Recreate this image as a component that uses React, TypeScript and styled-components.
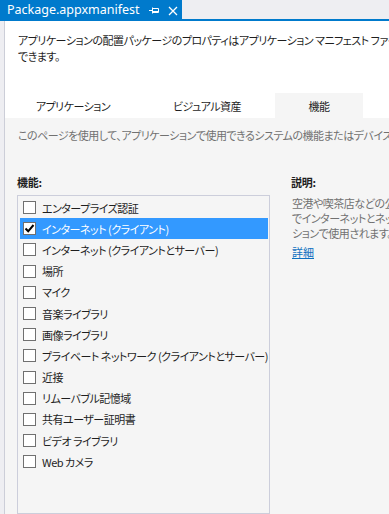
import React from "react";
import styled, { createGlobalStyle } from "styled-components";

const GlobalStyle = createGlobalStyle`
  html, body { margin: 0; padding: 0; overflow: hidden; background: #f5f5f5; }
  body { font-family: "Noto Sans CJK JP", "Noto Sans", sans-serif; }
`;

const JP = `"Noto Sans CJK JP", "Noto Sans", sans-serif`;

const Window = styled.div`
  width: 389px;
  height: 514px;
  overflow: hidden;
  display: flex;
  flex-direction: column;
  background: #f5f5f5;
`;

const TabStrip = styled.div`
  height: 19px;
  flex: none;
  background: #eeeef2;
  border-bottom: 2px solid #007acc;
  display: flex;
`;

const DocTab = styled.div`
  width: 182px;
  background: #007acc;
  color: #ffffff;
  display: flex;
  align-items: center;
  padding-left: 7px;
  box-sizing: border-box;
  font-family: "Noto Sans", sans-serif;
  font-size: 12.5px;
  height: 21px;
  margin-bottom: -2px;
`;

const DocTitle = styled.span`
  flex: 1;
  white-space: nowrap;
  line-height: 19px;
  padding-bottom: 2px;
`;

const IconBtn = styled.span`
  width: 17px;
  height: 19px;
  display: flex;
  align-items: center;
  justify-content: center;
  margin-right: 1px;
`;

const Body = styled.div`
  flex: 1;
  display: flex;
  min-height: 0;
`;

const LeftEdge = styled.div`
  width: 4px;
  flex: none;
  background: #eeeef2;
  border-right: 1px solid #ccced8;
`;

const Content = styled.div`
  flex: none;
  width: 600px;
  display: flex;
  flex-direction: column;
`;

const Header = styled.div`
  background: #ffffff;
  padding: 11px 0 0 13px;
`;

const Line = styled.div`
  font-family: ${JP};
  font-size: 11px;
  letter-spacing: -0.5px;
  line-height: 16px;
  color: #1e1e1e;
  white-space: nowrap;
  font-feature-settings: "palt";
`;

const PageTabs = styled.div`
  display: flex;
  margin-top: 29px;
  margin-left: -12px;
`;

const PageTab = styled.div<{ $active?: boolean; $width: number }>`
  height: 25px;
  width: ${(p) => p.$width}px;
  display: flex;
  align-items: center;
  justify-content: center;
  font-family: ${JP};
  font-size: 11px;
  letter-spacing: -0.5px;
  color: #1e1e1e;
  background: ${(p) => (p.$active ? "#f5f5f5" : "transparent")};
  font-feature-settings: "palt";
  margin-left: ${(p) => (p.$active ? "1px" : "0")};
`;

const Main = styled.div`
  flex: 1;
  padding: 9px 0 0 13px;
  display: flex;
  flex-direction: column;
`;

const Intro = styled(Line)`
  color: #717171;
`;

const Columns = styled.div`
  display: flex;
  gap: 22px;
  margin-top: 31px;
  flex: 1;
`;

const ListCol = styled.div`
  width: 252px;
  display: flex;
  flex-direction: column;
`;

const Label = styled.div`
  font-family: ${JP};
  font-size: 11px;
  letter-spacing: -0.3px;
  font-weight: 700;
  line-height: 16px;
  color: #1e1e1e;
  margin-left: -1px;
  font-feature-settings: "palt";
`;

const ListBox = styled.div`
  margin-top: 5px;
  margin-left: -1px;
  flex: 1;
  border: 1px solid #cccedb;
  padding: 1px 1px 0 2px;
  box-sizing: border-box;
  height: 400px;
`;

const Row = styled.div<{ $selected?: boolean }>`
  height: 21.2px;
  display: flex;
  align-items: center;
  gap: 6px;
  padding-left: 3px;
  background: ${(p) => (p.$selected ? "#3399ff" : "transparent")};
  color: ${(p) => (p.$selected ? "#ffffff" : "#1e1e1e")};
  font-family: ${JP};
  font-size: 11px;
  letter-spacing: -0.5px;
  white-space: nowrap;
  font-feature-settings: "palt";
`;

const Box = styled.span`
  width: 13px;
  height: 13px;
  box-sizing: border-box;
  border: 1px solid #707070;
  background: #ffffff;
  flex: none;
  display: flex;
  align-items: center;
  justify-content: center;
`;

const DescCol = styled.div`
  display: flex;
  flex-direction: column;
  width: 300px;
`;

const DescText = styled.div`
  margin-top: 6px;
  font-family: ${JP};
  font-size: 11px;
  letter-spacing: -0.5px;
  line-height: 15px;
  color: #717171;
  white-space: nowrap;
  font-feature-settings: "palt";
`;

const Link = styled.a`
  margin-top: 3px;
  font-family: ${JP};
  font-size: 11px;
  line-height: 16px;
  color: #0e70c0;
  text-decoration: underline;
  align-self: flex-start;
`;

const items = [
  "エンタープライズ認証",
  "インターネット (クライアント)",
  "インターネット (クライアントとサーバー)",
  "場所",
  "マイク",
  "音楽ライブラリ",
  "画像ライブラリ",
  "プライベート ネットワーク (クライアントとサーバー)",
  "近接",
  "リムーバブル記憶域",
  "共有ユーザー証明書",
  "ビデオ ライブラリ",
  "Web カメラ",
];

const PinIcon = () => (
  <svg width="11" height="9" viewBox="0 0 11 9" fill="none" stroke="#fff" strokeWidth="1">
    <path d="M0 4.5H3.5" />
    <path d="M3.5 1.5V7.5" />
    <path d="M3.5 2.5H9.5V6.5H3.5" />
    <path d="M3.5 5.5H9.5" />
  </svg>
);

const CloseIcon = () => (
  <svg width="10" height="10" viewBox="0 0 10 10" fill="none" stroke="#fff" strokeWidth="1.3">
    <path d="M1 1L9 9M9 1L1 9" />
  </svg>
);

const Check = () => (
  <svg width="11" height="11" viewBox="0 0 11 11" fill="none" stroke="#000" strokeWidth="2">
    <path d="M1.5 5.5L4.2 8.3L9.5 2" />
  </svg>
);

export default function App() {
  return (
    <>
      <GlobalStyle />
      <Window>
        <TabStrip>
          <DocTab>
            <DocTitle>Package.appxmanifest</DocTitle>
            <IconBtn>
              <PinIcon />
            </IconBtn>
            <IconBtn>
              <CloseIcon />
            </IconBtn>
          </DocTab>
        </TabStrip>
        <Body>
          <LeftEdge />
          <Content>
            <Header>
              <Line>
                アプリケーションの配置パッケージのプロパティはアプリケーション マニフェスト ファイルで設定されます。このデザイナーを使用して、これらのプロパティを設定
              </Line>
              <Line>できます。</Line>
              <PageTabs>
                <PageTab $width={134}>アプリケーション</PageTab>
                <PageTab $width={134}>ビジュアル資産</PageTab>
                <PageTab $width={88} $active>
                  機能
                </PageTab>
              </PageTabs>
            </Header>
            <Main>
              <Intro>
                このページを使用して、アプリケーションで使用できるシステムの機能またはデバイスを指定します。
              </Intro>
              <Columns>
                <ListCol>
                  <Label>機能:</Label>
                  <ListBox>
                    {items.map((t, i) => (
                      <Row key={t} $selected={i === 1}>
                        <Box>{i === 1 && <Check />}</Box>
                        {t}
                      </Row>
                    ))}
                  </ListBox>
                </ListCol>
                <DescCol>
                  <Label>説明:</Label>
                  <DescText>
                    空港や喫茶店などの公共の場所にあるネットワーク
                    <br />
                    でインターネットとネットワークへのアクセスがアプリケー
                    <br />
                    ションで使用されます。
                  </DescText>
                  <Link>詳細</Link>
                </DescCol>
              </Columns>
            </Main>
          </Content>
        </Body>
      </Window>
    </>
  );
}
